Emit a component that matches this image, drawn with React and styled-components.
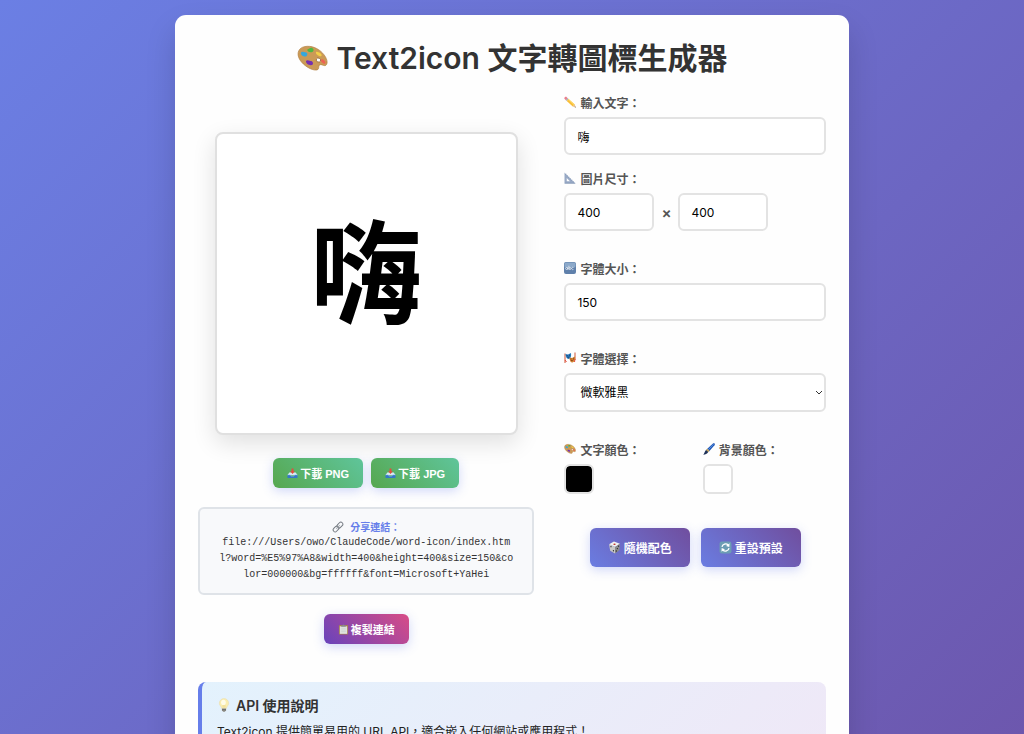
import React, { useState } from 'react'
import styled, { createGlobalStyle } from 'styled-components'

const GlobalStyle = createGlobalStyle`
    * {
        margin: 0;
        padding: 0;
        box-sizing: border-box;
    }

    body {
        height: 100vh;
        overflow: hidden;
        font-family: Inter, 'Noto Sans CJK TC', sans-serif;
    }

    button, input, select {
        font-family: inherit;
    }
`

const Page = styled.div`
    min-height: 1050px;
    padding: 15px;
    background: linear-gradient(135deg, #6b7fe4 0%, #6d50a4 100%);
`

const Container = styled.main`
    max-width: 674px;
    min-height: 1020px;
    margin: 0 auto;
    padding: 22px 23px;
    background: #fefefe;
    border-radius: 11px;
    box-shadow: 0 15px 30px rgba(0, 0, 0, 0.15);
`

const Title = styled.h1`
    display: flex;
    justify-content: center;
    align-items: center;
    gap: 9px;
    height: 43px;
    margin-bottom: 13px;
    font-size: 30px;
    font-weight: 600;
    line-height: 43px;
    color: #333;
`

const Columns = styled.div`
    display: grid;
    grid-template-columns: 9fr 7fr;
    gap: 30px;
`

const Preview = styled.section`
    display: flex;
    flex-direction: column;
    align-items: center;
    padding-top: 39px;
`

const Canvas = styled.div`
    display: flex;
    justify-content: center;
    align-items: center;
    width: 303px;
    height: 303px;
    margin-bottom: 23px;
    padding-bottom: 36px;
    border: 2px solid #e0e0e0;
    border-radius: 8px;
    background: #fff;
    box-shadow: 0 8px 23px rgba(0, 0, 0, 0.12);
    font-family: 'Noto Sans CJK TC', sans-serif;
    font-size: 112px;
    font-weight: 700;
    line-height: 1;
    color: #000;
`

const ButtonRow = styled.div`
    display: flex;
    justify-content: center;
    gap: ${(props) => props.$gap};
`

const Button = styled.button`
    display: flex;
    align-items: center;
    gap: ${(props) => (props.$large ? '3px' : '2px')};
    height: ${(props) => (props.$large ? '39px' : '30px')};
    padding: ${(props) => (props.$large ? '0 18px' : '0 14px')};
    border: none;
    border-radius: 6px;
    background: ${(props) => props.$fill};
    box-shadow: 0 3px 11px rgba(102, 126, 234, 0.3);
    font-family: 'Liberation Sans', 'Noto Sans CJK TC', sans-serif;
    font-size: ${(props) => (props.$large ? '12px' : '11px')};
    font-weight: 700;
    color: #fff;
    cursor: pointer;
`

const ShareBox = styled.div`
    width: 100%;
    margin: 19px 0;
    padding: 10px 18px;
    border: 2px solid #dfe3e8;
    border-radius: 6px;
    background: #f8f9fb;
    font-family: 'Liberation Mono', monospace;
    font-size: 10px;
    line-height: 16px;
    text-align: center;
    word-break: break-all;
    color: #333;
`

const ShareTitle = styled.strong`
    display: flex;
    justify-content: center;
    align-items: center;
    gap: 6px;
    font-family: 'Noto Sans CJK TC', sans-serif;
    color: #667eea;
`

const Controls = styled.section`
    display: flex;
    flex-direction: column;
`

const Field = styled.div`
    margin-bottom: ${(props) => props.$space || '28px'};
`

const Label = styled.label`
    display: flex;
    align-items: center;
    gap: 4px;
    height: 18px;
    margin-bottom: 6px;
    font-size: 12px;
    font-weight: 600;
    color: #555;
`

const Input = styled.input`
    width: 100%;
    height: 38px;
    padding: 0 11px;
    border: 2px solid #e3e3e3;
    border-radius: 6px;
    background: #fff;
    font-size: 12px;
    color: #000;
`

const SizeRow = styled.div`
    display: flex;
    align-items: center;
    gap: 7px;
    font-size: 15px;
    font-weight: 600;
    color: #555;

    ${Input} {
        width: 90px;
    }
`

const SelectWrap = styled.div`
    display: grid;
    align-items: center;

    select, svg {
        grid-area: 1 / 1;
    }

    svg {
        justify-self: end;
        margin-right: 3px;
        pointer-events: none;
    }
`

const Select = styled.select`
    width: 100%;
    height: 39px;
    padding: 0 14px;
    border: 2px solid #e3e3e3;
    border-radius: 6px;
    background: #fff;
    appearance: none;
    font-size: 12px;
    color: #000;
`

const ColorGrid = styled.div`
    display: grid;
    grid-template-columns: 1fr 1fr;
    gap: 15px;
    margin-bottom: 34px;
`

const ColorInput = styled.input`
    display: block;
    width: 30px;
    height: 30px;
    border: 2px solid #e3e3e3;
    border-radius: 6px;
    background: none;
    appearance: none;
    cursor: pointer;

    &::-webkit-color-swatch-wrapper {
        padding: 0;
    }

    &::-webkit-color-swatch {
        border: none;
        border-radius: 4px;
    }
`

const ApiInfo = styled.section`
    margin-top: 38px;
    padding: 13px 15px;
    border-left: 4px solid #667eea;
    border-radius: 8px;
    background: linear-gradient(135deg, #e3f2fd, #f3e5f5);
    min-height: 300px;
`

const ApiTitle = styled.h2`
    display: flex;
    align-items: center;
    gap: 5px;
    height: 20px;
    margin-bottom: 8px;
    font-size: 14px;
    font-weight: 600;
    color: #333;
`

const ApiText = styled.p`
    font-size: 12px;
    line-height: 18px;
    color: #222;
`

const Svg = ({ size = 12, children }) => (
    <svg width={size} height={size} viewBox="0 0 24 24" fill="none" aria-hidden="true">
        {children}
    </svg>
)

const PaletteIcon = ({ size }) => (
    <Svg size={size}>
        <path d="M4.500 3.200C9 1.600 14.500 3 18.500 6.500C22.500 10 24.300 14.500 22.800 16.800C21.600 18.600 19.600 16.400 17.900 16.800C16 17.300 17.800 20.400 15.300 20.900C11.500 21.500 5 17.500 2.200 13C-.2 9 .5 4.800 4.500 3.200Z" fill="#cb9a56" stroke="#b07c3c" strokeWidth=".5" />
        <ellipse cx="16.600" cy="13.200" rx="1.700" ry="1.500" transform="rotate(25 16.600 13.200)" fill="#fff" stroke="#8a5a28" strokeWidth=".5" />
        <path d="M3 7.500c1-1.500 2.500-.5 3.500-.3 1.800.3 2 2 .8 3-1.500.8-4.600-.5-4.300-2.700z" fill="#35a7dc" />
        <path d="M8 5c1.500-.2 1.800-1.500 3.500-1.200 1.700.5 1.800 2.500.2 3.200C10 7.600 7.600 6.500 8 5z" fill="#4db842" />
        <path d="M14.700 7c1-.8 2 .2 3 .6 1.300.8 2 2.300.8 2.700-1.600.2-4.400-1.800-3.800-3.300z" fill="#f3cf48" />
        <path d="M18.700 13c1-1 2.600.5 3.200 1.700.5 1.300-.6 1.700-1.500 1.200-1-.6-2.300-1.700-1.700-2.900z" fill="#ee6254" />
        <path d="M7 14c.8-1.200 2-.2 3.300 0 1.900 0 2.600 1.700 1.700 2.900-1.700 1.200-5.500-.8-5-2.900z" fill="#7430b0" />
    </Svg>
)

const PencilIcon = () => (
    <Svg>
        <path d="M.5 5Q.500 1.500 4 1L7.500 4.500 3.800 8.500Z" fill="#ea7f8c" />
        <path d="M3.500 8 7.200 4 9.200 6 5.500 10Z" fill="#a9adb8" />
        <path d="M5.500 10 9.200 6 21.500 17 17.500 21Z" fill="#f9bd35" />
        <path d="M8 7.400 9.200 6 21.500 17 20 18.500Z" fill="#fcd765" />
        <path d="M17.500 21 21.500 17 23.500 23Z" fill="#e6bf8d" />
        <path d="m21.500 22.300 1.300-1.500.7 2.200Z" fill="#333" />
    </Svg>
)

const RulerIcon = () => (
    <Svg>
        <path fillRule="evenodd" d="M1 1 23 23H1ZM5.500 12V18.500H12Z" fill="#98a9c5" />
        <path d="m3 5 1.500-1M6 8l1.500-1M9 11l1.500-1M12 14l1.500-1M15 17l1.500-1M18 20l1.500-1M1.500 22.500h21" stroke="#6f82a3" />
    </Svg>
)

const AbcIcon = () => (
    <Svg>
        <rect x="0" y="0" width="24" height="24" rx="4" fill="#5f80ab" />
        <rect x="1" y="1" width="22" height="10" rx="3" fill="#8ca9ca" />
        <circle cx="5.200" cy="13" r="2" stroke="#fff" strokeWidth="1.300" />
        <path d="M7.500 10.500V15.300M9.800 7.500V15.300M18.800 11A2.300 2.300 0 1 0 18.800 15" stroke="#fff" strokeWidth="1.300" />
        <circle cx="12" cy="13" r="2" stroke="#fff" strokeWidth="1.300" />
    </Svg>
)

const MasksIcon = () => (
    <Svg>
        <path d="M2 3v19M22 1v15" stroke="#cf5434" strokeWidth="2" />
        <path d="m3 4 5 1 6-3c1 7-1 11-4 12-4 0-7-4-7-10Z" fill="#2478bd" />
        <path d="m5 7 3 1m2-1 2-1M7 11l4-1" stroke="#152f53" strokeWidth="1.300" />
        <path d="m11 11 5 1 6-3c1 6-1 11-5 12-4 0-6-4-6-10Z" fill="#cf812f" />
        <path d="m13 14 2 0m3-1 2-1m-6 5q3 1 5-2" stroke="#6b2c13" strokeWidth="1.300" />
        <path d="m2 16 3 4M22 14l-1 6" stroke="#e6483b" strokeWidth="2" />
    </Svg>
)

const BrushIcon = () => (
    <Svg>
        <path d="M20.500 .5C23.500 0 24.500 2 23 4.500L12 17 7 13Z" fill="#1f55b5" />
        <path d="M21 2.500 10 14" stroke="#6ca8ed" strokeWidth="1.500" />
        <path d="m8.500 11.500 4.500 4-3 3-4.500-4Z" fill="#c8a356" />
        <path d="M6 14 10.500 18C8 21.500 5 23 .5 23.500 3 21 3 17 6 14Z" fill="#1d3158" />
    </Svg>
)

const InboxIcon = () => (
    <Svg size={11}>
        <path d="M5 10h14l4 6H1Z" fill="#d8e8f5" />
        <path d="M1 15h6l2 3h6l2-3h6v5q0 2-2 2H3q-2 0-2-2Z" fill="#3577c7" />
        <path d="M1 15h6l2 3h6l2-3h6" stroke="#84b8eb" />
        <path d="M10 1h4v6h3l-5 6-5-6h3Z" fill="#e64a40" />
    </Svg>
)

const LinkIcon = () => (
    <Svg>
        <g transform="rotate(-45 12 12)" stroke="#757b82" strokeWidth="2">
            <rect x="0" y="8" width="13" height="8" rx="4" />
            <rect x="11" y="8" width="13" height="8" rx="4" />
            <path d="M7 12h10" stroke="#a3a8ae" />
        </g>
    </Svg>
)

const ClipboardIcon = () => (
    <Svg size={11}>
        <rect x="2" y="2" width="20" height="21" rx="2" fill="#a5804f" />
        <path d="M4 5h16v16.500h-16z" fill="#dfe3df" />
        <path d="M7 9.500h10M7 13h10M7 16.500h10" stroke="#c3c8c5" />
        <path d="M7 3h3q2-4 4 0h3v3H7Z" fill="#878c92" />
    </Svg>
)

const DiceIcon = () => (
    <Svg size={13}>
        <path d="m2 6 9-5 11 4-9 6Z" fill="#f2f2ef" />
        <path d="m2 6 11 5v12L4 18Z" fill="#c9c9c6" />
        <path d="m13 11 9-6-1 12-8 6Z" fill="#8b8b8a" />
        <ellipse cx="12" cy="6" rx="2.200" ry="1.200" fill="#bd312c" />
        <g fill="#292929">
            <circle cx="5.500" cy="10.500" r="1.200" />
            <circle cx="10" cy="18" r="1.200" />
            <circle cx="19.500" cy="9.500" r="1.200" />
            <circle cx="17.300" cy="14" r="1.200" />
            <circle cx="15.300" cy="18.500" r="1.200" />
        </g>
    </Svg>
)

const ResetIcon = () => (
    <Svg size={13}>
        <rect x="1" y="1" width="22" height="22" rx="4" fill="#6c9db4" />
        <path d="M5.500 11A6.700 6.700 0 0 1 17 7.500M18.500 13A6.700 6.700 0 0 1 7 16.500" stroke="#fff" strokeWidth="2.400" />
        <path d="m19.500 4-.5 7-6-2ZM4.500 20l.5-7 6 2Z" fill="#fff" />
    </Svg>
)

const BulbIcon = () => (
    <Svg size={14}>
        <path d="M12 1a8 8 0 0 1 8 8c0 4-3.500 5-4 9H8c-.5-4-4-5-4-9a8 8 0 0 1 8-8Z" fill="#fbeeb0" stroke="#eadcae" />
        <ellipse cx="11" cy="7.500" rx="4" ry="4.500" fill="#fffce8" />
        <path d="M10.500 17V12M13.500 12v5" stroke="#e6cf83" />
        <path d="M8.500 18h7v3l-2 2.500h-3l-2-2.500Z" fill="#8d8c84" />
        <path d="M8.500 20h7" stroke="#5c5c58" />
    </Svg>
)

const GREEN = 'linear-gradient(45deg, #56a74f, #5fc59b)'
const PURPLE = 'linear-gradient(45deg, #6a7de2, #704e9e)'
const PINK = 'linear-gradient(45deg, #6843bb, #d84c87)'

const shareUrl =
    'file:///Users/owo/ClaudeCode/word-icon/index.html?word=%E5%97%A8&width=400&height=400&size=150&color=000000&bg=ffffff&font=Microsoft+YaHei'

const App = () => {
    const [word, setWord] = useState('嗨')

    return (
        <>
            <GlobalStyle />
            <Page>
                <Container>
                    <Title><PaletteIcon size={31} />Text2icon 文字轉圖標生成器</Title>
                    <Columns>
                        <Preview>
                            <Canvas>{word}</Canvas>
                            <ButtonRow $gap="8px">
                                <Button $fill={GREEN}><InboxIcon />下載 PNG</Button>
                                <Button $fill={GREEN}><InboxIcon />下載 JPG</Button>
                            </ButtonRow>
                            <ShareBox>
                                <ShareTitle><LinkIcon />分享連結：</ShareTitle>
                                {shareUrl}
                            </ShareBox>
                            <Button $fill={PINK}><ClipboardIcon />複製連結</Button>
                        </Preview>
                        <Controls>
                            <Field $space="14px">
                                <Label htmlFor="word"><PencilIcon />輸入文字：</Label>
                                <Input id="word" value={word} onChange={(e) => setWord(e.target.value)} />
                            </Field>
                            <Field>
                                <Label htmlFor="width"><RulerIcon />圖片尺寸：</Label>
                                <SizeRow>
                                    <Input id="width" defaultValue="400" />
                                    ×
                                    <Input aria-label="高度" defaultValue="400" />
                                </SizeRow>
                            </Field>
                            <Field>
                                <Label htmlFor="size"><AbcIcon />字體大小：</Label>
                                <Input id="size" defaultValue="150" />
                            </Field>
                            <Field>
                                <Label htmlFor="font"><MasksIcon />字體選擇：</Label>
                                <SelectWrap>
                                    <Select id="font">
                                        <option>微軟雅黑</option>
                                    </Select>
                                    <svg width="8" height="6" viewBox="0 0 8 6" fill="none">
                                        <path d="m1 1 3 3 3-3" stroke="#333" />
                                    </svg>
                                </SelectWrap>
                            </Field>
                            <ColorGrid>
                                <div>
                                    <Label htmlFor="color"><PaletteIcon />文字顏色：</Label>
                                    <ColorInput id="color" type="color" defaultValue="#000000" />
                                </div>
                                <div>
                                    <Label htmlFor="bg"><BrushIcon />背景顏色：</Label>
                                    <ColorInput id="bg" type="color" defaultValue="#ffffff" />
                                </div>
                            </ColorGrid>
                            <ButtonRow $gap="11px">
                                <Button $large $fill={PURPLE}><DiceIcon />隨機配色</Button>
                                <Button $large $fill={PURPLE}><ResetIcon />重設預設</Button>
                            </ButtonRow>
                        </Controls>
                    </Columns>
                    <ApiInfo>
                        <ApiTitle><BulbIcon />API 使用說明</ApiTitle>
                        <ApiText>Text2icon 提供簡單易用的 URL API，適合嵌入任何網站或應用程式！</ApiText>
                    </ApiInfo>
                </Container>
            </Page>
        </>
    )
}

export default App
